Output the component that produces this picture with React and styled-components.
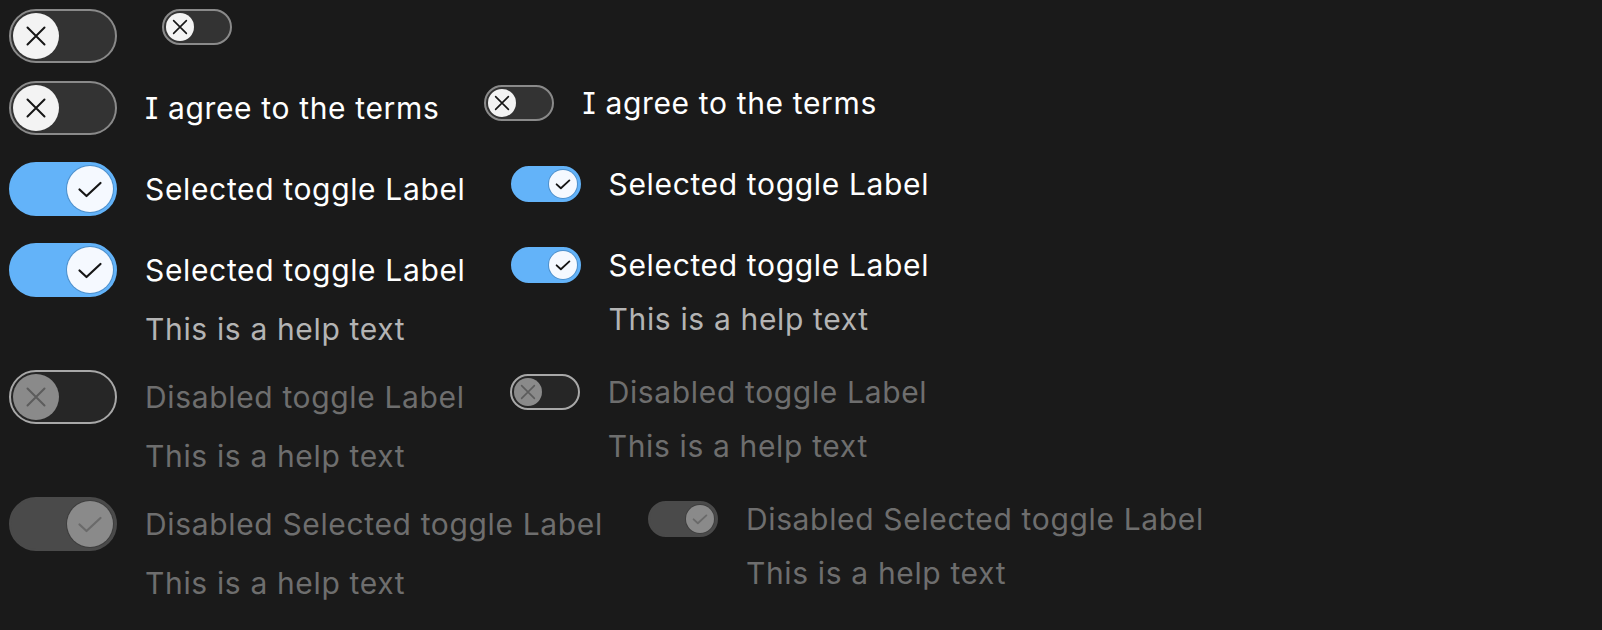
import React from "react";
import styled, { createGlobalStyle, css } from "styled-components";

const GlobalStyle = createGlobalStyle`
  html, body {
    margin: 0;
    padding: 0;
    background: #1a1a1a;
  }
  body {
    font-family: Inter, "Noto Sans", sans-serif;
    font-feature-settings: "cv08" 1;
  }
`;

const Page = styled.div`
  display: flex;
  flex-direction: column;
  padding: 9px 9px;
  min-height: 630px;
  box-sizing: border-box;
  background: #1a1a1a;
`;

const Row = styled.div`
  display: flex;
  align-items: flex-start;
  gap: 45px;
  margin-top: ${(p) => p.$space || 0}px;
`;

const Field = styled.label`
  display: inline-grid;
  grid-template-columns: ${(p) => (p.$hasText ? "auto auto" : "auto")};
  column-gap: 28px;
  row-gap: 10px;
  align-items: center;
`;

const sizes = {
  lg: { w: 108, h: 54, knob: 46 },
  md: { w: 70, h: 36, knob: 28 },
};

const Track = styled.span`
  grid-column: 1;
  grid-row: 1;
  box-sizing: border-box;
  display: flex;
  align-items: center;
  justify-content: ${(p) => (p.$on ? "flex-end" : "flex-start")};
  width: ${(p) => sizes[p.$size].w}px;
  height: ${(p) => sizes[p.$size].h}px;
  padding: 2px;
  border-radius: 999px;
  border: 2px solid;
  ${(p) =>
    p.$on && !p.$disabled &&
    css`
      background: #63b3f9;
      border-color: #63b3f9;
    `}
  ${(p) =>
    !p.$on && !p.$disabled &&
    css`
      background: #333333;
      border-color: #8a8a8a;
    `}
  ${(p) =>
    !p.$on && p.$disabled &&
    css`
      background: #262626;
      border-color: #a8a8a8;
    `}
  ${(p) =>
    p.$on && p.$disabled &&
    css`
      background: #4a4a4a;
      border-color: #4a4a4a;
    `}
`;

const Knob = styled.span`
  display: flex;
  align-items: center;
  justify-content: center;
  width: ${(p) => sizes[p.$size].knob}px;
  height: ${(p) => sizes[p.$size].knob}px;
  border-radius: 50%;
  flex: none;
  background: ${(p) =>
    p.$disabled ? "#8a8a8a" : p.$on ? "#f5f9ff" : "#f3f3f3"};
  box-shadow: ${(p) =>
    p.$on
      ? p.$disabled
        ? "0 0 0 1px #3e3e3e"
        : "0 0 0 1px rgba(40, 80, 120, 0.35)"
      : "none"};
  color: ${(p) => (p.$disabled ? (p.$on ? "#6a6a6a" : "#5c5c5c") : "#161616")};
`;

const textBase = css`
  grid-column: 2;
  font-size: 30px;
  letter-spacing: 0.65px;
  line-height: 44px;
  white-space: nowrap;
`;

const Label = styled.span`
  ${textBase}
  grid-row: 1;
  color: ${(p) => (p.$disabled ? "#6e6e6e" : "#ffffff")};
`;

const Help = styled.span`
  ${textBase}
  grid-row: 2;
  color: ${(p) => (p.$disabled ? "#6e6e6e" : "#b4b4b4")};
`;

function XIcon({ size }) {
  const d = size === "lg" ? 8.5 : 10.5;
  const s = size === "lg" ? 2 : 2.6;
  return (
    <svg width="100%" height="100%" viewBox="0 0 46 46" fill="none">
      <path
        d={`M${23 - d} ${23 - d}L${23 + d} ${23 + d}M${23 + d} ${23 - d}L${23 - d} ${23 + d}`}
        stroke="currentColor"
        strokeWidth={s}
        strokeLinecap="round"
      />
    </svg>
  );
}

function CheckIcon({ size }) {
  const s = size === "lg" ? 2.2 : 3;
  return (
    <svg width="100%" height="100%" viewBox="0 0 46 46" fill="none">
      <path
        d="M12.5 23.5L19.5 30L33.5 17"
        stroke="currentColor"
        strokeWidth={s}
        strokeLinecap="round"
        strokeLinejoin="round"
      />
    </svg>
  );
}

function Toggle({ size = "lg", on = false, disabled = false, label, help }) {
  return (
    <Field $hasText={!!label}>
      <Track $size={size} $on={on} $disabled={disabled}>
        <Knob $size={size} $on={on} $disabled={disabled}>
          {on ? <CheckIcon size={size} /> : <XIcon size={size} />}
        </Knob>
      </Track>
      {label && <Label $disabled={disabled}>{label}</Label>}
      {help && <Help $disabled={disabled}>{help}</Help>}
    </Field>
  );
}

export default function App() {
  return (
    <>
      <GlobalStyle />
      <Page>
        <Row>
          <Toggle size="lg" />
          <Toggle size="md" />
        </Row>
        <Row $space={18}>
          <Toggle size="lg" label="I agree to the terms" />
          <Toggle size="md" label="I agree to the terms" />
        </Row>
        <Row $space={27}>
          <Toggle size="lg" on label="Selected toggle Label" />
          <Toggle size="md" on label="Selected toggle Label" />
        </Row>
        <Row $space={27}>
          <Toggle size="lg" on label="Selected toggle Label" help="This is a help text" />
          <Toggle size="md" on label="Selected toggle Label" help="This is a help text" />
        </Row>
        <Row $space={19}>
          <Toggle size="lg" disabled label="Disabled toggle Label" help="This is a help text" />
          <Toggle size="md" disabled label="Disabled toggle Label" help="This is a help text" />
        </Row>
        <Row $space={19}>
          <Toggle size="lg" on disabled label="Disabled Selected toggle Label" help="This is a help text" />
          <Toggle size="md" on disabled label="Disabled Selected toggle Label" help="This is a help text" />
        </Row>
      </Page>
    </>
  );
}
